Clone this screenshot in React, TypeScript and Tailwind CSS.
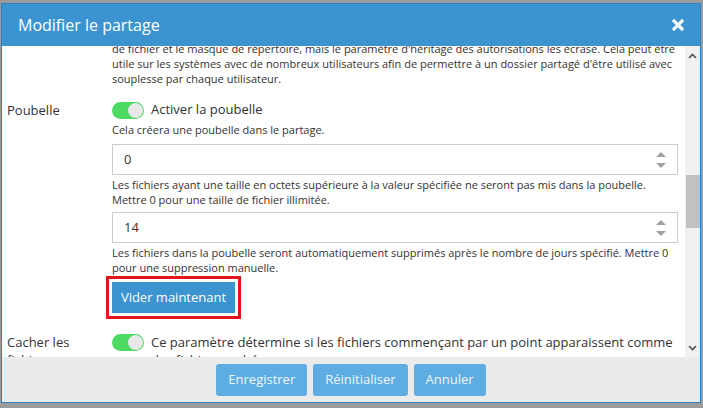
import type { ReactNode } from 'react';

const font = "font-['Open_Sans',sans-serif]";

function Toggle() {
    return (
        <span className="flex h-[17px] w-[32px] shrink-0 items-center justify-end rounded-full bg-[#4cd964] px-[1px]">
            <span className="h-[15px] w-[15px] rounded-full bg-[#e8e8e8]" />
        </span>
    );
}

function Spinner() {
    return (
        <svg width="12" height="18" viewBox="0 0 12 18" className="shrink-0">
            <path d="M1 6 L6 1 L11 6 Z" fill="#a0a0a0" />
            <path d="M1 12 L6 17 L11 12 Z" fill="#a0a0a0" />
        </svg>
    );
}

function NumberInput({ value }: { value: string }) {
    return (
        <div className="flex h-[31px] items-center justify-between border border-[#cccccc] bg-white pl-[11px] pr-[10px] text-[13px] text-[#333]">
            <span>{value}</span>
            <Spinner />
        </div>
    );
}

function Help({ children, className = '' }: { children: ReactNode; className?: string }) {
    return <p className={`text-[11px] leading-[15px] text-[#333] ${className}`}>{children}</p>;
}

function Row({ label, children, className = '' }: { label: ReactNode; children: ReactNode; className?: string }) {
    return (
        <div className={`flex ${className}`}>
            <div className="w-[105px] shrink-0 text-[13px] leading-[18px] text-[#333]">{label}</div>
            <div className="flex min-w-0 flex-1 flex-col">{children}</div>
        </div>
    );
}

function Scrollbar() {
    return (
        <div className="flex w-[15px] shrink-0 flex-col items-center bg-[#f1f1f1]">
            <svg width="9" height="6" viewBox="0 0 9 6" className="mt-[7px]">
                <path d="M1 5 L4.5 1.5 L8 5" stroke="#505050" strokeWidth="1.6" fill="none" />
            </svg>
            <div className="mt-[116px] h-[53px] w-[14px] bg-[#c1c1c1]" />
            <svg width="9" height="6" viewBox="0 0 9 6" className="mt-auto mb-[6px]">
                <path d="M1 1 L4.5 4.5 L8 1" stroke="#505050" strokeWidth="1.6" fill="none" />
            </svg>
        </div>
    );
}

const footerBtn =
    'h-[32px] rounded-[3px] bg-[#5dade2] px-[12px] text-[13px] text-[#eef6fc]';

export default function App() {
    return (
        <div className={`h-[408px] w-[703px] overflow-hidden bg-[#9b9b9b] pt-[3px] pl-[1px] ${font}`}>
            <div className="flex h-[400px] w-[700px] flex-col border border-[#2f82c2] bg-white">
                <div className="flex h-[42px] shrink-0 items-center justify-between bg-[#3b94d0] pl-[16px] pr-[16px]">
                    <h1 className="text-[16px] text-white">Modifier le partage</h1>
                    <svg width="12" height="12" viewBox="0 0 12 12">
                        <path d="M2 2 L10 10 M10 2 L2 10" stroke="#f4f9fd" strokeWidth="3.2" strokeLinecap="square" />
                    </svg>
                </div>

                <div className="flex h-[311px] shrink-0">
                    <div className="flex-1 overflow-hidden pl-[5px] pr-[7px]">
                        <Row label="">
                            <Help className="-mt-[5px]">
                                de fichier et le masque de répertoire, mais le paramètre d'héritage des autorisations les écrase. Cela peut être
                                utile sur les systèmes avec de nombreux utilisateurs afin de permettre à un dossier partagé d'être utilisé avec
                                souplesse par chaque utilisateur.
                            </Help>
                        </Row>

                        <Row label="Poubelle" className="mt-[15px]">
                            <div className="flex h-[18px] items-center gap-[7px] text-[13px] text-[#333]">
                                <Toggle />
                                <span>Activer la poubelle</span>
                            </div>
                            <Help className="mt-[3px]">Cela créera une poubelle dans le partage.</Help>
                            <div className="mt-[7px]">
                                <NumberInput value="0" />
                            </div>
                            <Help className="mt-[2px]">
                                Les fichiers ayant une taille en octets supérieure à la valeur spécifiée ne seront pas mis dans la poubelle.
                                <br />
                                Mettre 0 pour une taille de fichier illimitée.
                            </Help>
                            <div className="mt-[5px]">
                                <NumberInput value="14" />
                            </div>
                            <Help className="mt-[2px]">
                                Les fichiers dans la poubelle seront automatiquement supprimés après le nombre de jours spécifié. Mettre 0
                                <br />
                                pour une suppression manuelle.
                            </Help>
                            <div className="mt-[7px]">
                                <button className="h-[31px] w-[123px] bg-[#3b94d0] text-[13px] text-white outline outline-[3px] outline-offset-[3px] outline-[#e3141b]">
                                    Vider maintenant
                                </button>
                            </div>
                        </Row>

                        <Row label={<>Cacher les<br />fichiers</>} className="mt-[20px]">
                            <div className="flex items-start gap-[7px] text-[13px] leading-[18px] text-[#333]">
                                <span className="mt-[1px]"><Toggle /></span>
                                <span>
                                    Ce paramètre détermine si les fichiers commençant par un point apparaissent comme
                                    des fichiers cachés.
                                </span>
                            </div>
                        </Row>
                    </div>
                    <Scrollbar />
                </div>

                <div className="flex flex-1 justify-center gap-[6px] bg-[#ebebeb] pt-[7px]">
                    <button className={footerBtn}>Enregistrer</button>
                    <button className={footerBtn}>Réinitialiser</button>
                    <button className={footerBtn}>Annuler</button>
                </div>
            </div>
        </div>
    );
}
